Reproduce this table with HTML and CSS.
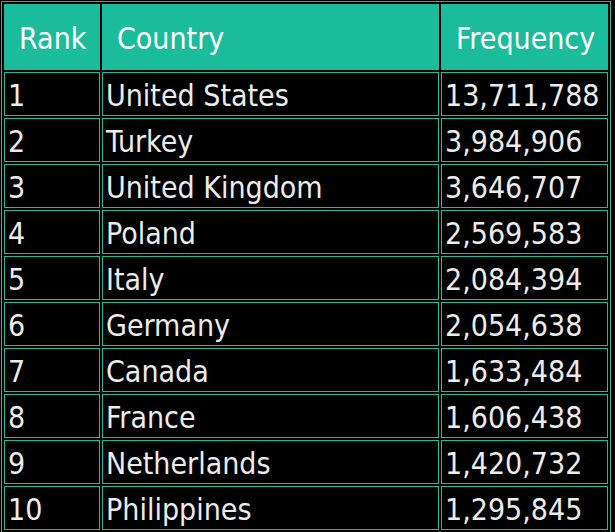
FILE: index.html
```html
<!DOCTYPE html>
<html>
<head>
<meta charset="utf-8">
<link rel="stylesheet" href="styles.css">
</head>
<body>
<table class="freq">
  <colgroup>
    <col class="c-rank">
    <col class="c-country">
    <col class="c-freq">
  </colgroup>
  <thead>
    <tr><th>Rank</th><th>Country</th><th>Frequency</th></tr>
  </thead>
  <tbody>
    <tr><td>1</td><td>United States</td><td>13,711,788</td></tr>
    <tr><td>2</td><td>Turkey</td><td>3,984,906</td></tr>
    <tr><td>3</td><td>United Kingdom</td><td>3,646,707</td></tr>
    <tr><td>4</td><td>Poland</td><td>2,569,583</td></tr>
    <tr><td>5</td><td>Italy</td><td>2,084,394</td></tr>
    <tr><td>6</td><td>Germany</td><td>2,054,638</td></tr>
    <tr><td>7</td><td>Canada</td><td>1,633,484</td></tr>
    <tr><td>8</td><td>France</td><td>1,606,438</td></tr>
    <tr><td>9</td><td>Netherlands</td><td>1,420,732</td></tr>
    <tr><td>10</td><td>Philippines</td><td>1,295,845</td></tr>
  </tbody>
</table>
</body>
</html>
```

FILE: styles.css
```css
html, body {
  margin: 0;
  background: #000;
}
body {
  padding: 1px 0 0 1px;
}
.freq {
  border-collapse: separate;
  border-spacing: 2px;
  border: 1px solid #1abc9c;
  width: 610px;
  table-layout: fixed;
  font-family: "DejaVu Sans Condensed", "DejaVu Sans", sans-serif;
  font-size: 30px;
}
.c-rank { width: 96px; }
.c-country { width: 337px; }
.c-freq { width: 167px; }
.freq th, .freq td {
  border: 1px solid #1abc9c;
  text-align: left;
  white-space: nowrap;
  overflow: hidden;
  box-sizing: border-box;
}
.freq th {
  background: #1abc9c;
  color: #fff;
  font-weight: normal;
  height: 66px;
  padding: 3px 0 0 14px;
  line-height: 60px;
}
.freq td {
  background: #000;
  color: #ececec;
  height: 44px;
  padding: 4px 0 0 3px;
  line-height: 38px;
}
```
